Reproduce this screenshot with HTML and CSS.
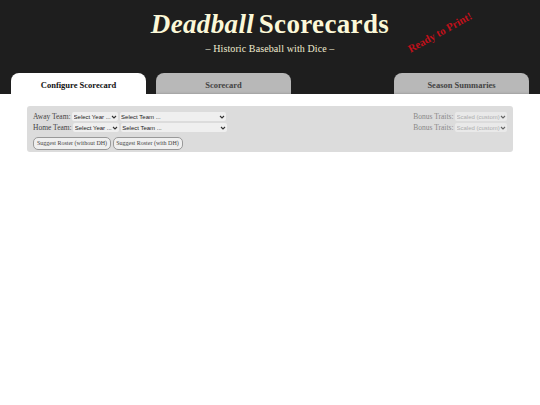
FILE: index.html
```html
<!DOCTYPE html>
<html>
<head>
    <title>Deadball Scorecards</title>
    <link rel="stylesheet" href="styles.css">
</head>
<body>
    <div class="header">
        <h1 class="title"><em>Deadball</em> Scorecards</h1>
        <div class="subtitle">– Historic Baseball with Dice –</div>
        <div class="stamp">Ready to Print!</div>
        <div class="tabs">
            <div class="tab active">Configure Scorecard</div>
            <div class="tab">Scorecard</div>
            <div class="tab-gap"></div>
            <div class="tab">Season Summaries</div>
        </div>
    </div>

    <form class="panel">
        <div class="panel-left">
            <div class="team-row">
                <label>Away Team:</label>
                <select class="year"><option>Select Year ...</option></select>
                <select class="team"><option>Select Team ...</option></select>
            </div>
            <div class="team-row">
                <label>Home Team:</label>
                <select class="year"><option>Select Year ...</option></select>
                <select class="team"><option>Select Team ...</option></select>
            </div>
            <div class="buttons">
                <button type="button" class="without-dh">Suggest Roster (without DH)</button>
                <button type="button" class="with-dh">Suggest Roster (with DH)</button>
            </div>
        </div>
        <div class="panel-right">
            <div class="team-row">
                <label>Bonus Traits:</label>
                <select class="traits" disabled><option>Scaled (custom)</option></select>
            </div>
            <div class="team-row">
                <label>Bonus Traits:</label>
                <select class="traits" disabled><option>Scaled (custom)</option></select>
            </div>
        </div>
    </form>
</body>
</html>
```

FILE: styles.css
```css
body {
    margin: 0;
    background: #fff;
    font-family: "Liberation Serif", serif;
}

.header {
    position: relative;
    height: 94px;
    background: #1e1e1e;
    overflow: hidden;
}

.title {
    margin: 0;
    padding-top: 9px;
    text-align: center;
    font-size: 27px;
    line-height: 31px;
    font-weight: bold;
    letter-spacing: 0.35px;
    word-spacing: -2.5px;
    color: #fbf8d8;
}

.subtitle {
    margin-top: 2px;
    text-align: center;
    font-size: 10px;
    line-height: 13px;
    letter-spacing: 0.1px;
    color: #efecd0;
}

.stamp {
    position: absolute;
    left: 404px;
    top: 26px;
    transform: rotate(-29deg);
    font-size: 10.8px;
    font-weight: bold;
    color: #c0101a;
}

.tabs {
    position: absolute;
    left: 11px;
    right: 11px;
    bottom: 0;
    display: flex;
    gap: 10px;
}

.tab {
    width: 135px;
    height: 21px;
    box-sizing: border-box;
    padding-top: 6px;
    background: #b8b8b8;
    border-radius: 8px 8px 0 0;
    box-shadow: inset 0 -2px 2px -1px #a2a2a2;
    text-align: center;
    font-size: 8.5px;
    line-height: 12px;
    font-weight: bold;
    color: #444;
}

.tab.active {
    background: #fff;
    box-shadow: none;
    color: #111;
}

.tab-gap {
    flex: 1;
}

.panel {
    display: flex;
    justify-content: space-between;
    margin: 12px 27px 0;
    padding: 5px 6px 4px 6px;
    height: 37px;
    background: #dcdcdc;
    border-radius: 3px;
}

.team-row {
    display: flex;
    align-items: center;
    gap: 1.5px;
    height: 11px;
    font-size: 7.5px;
    color: #444;
}

select {
    appearance: none;
    height: 9.5px;
    padding: 0 6px 0 1.5px;
    border: 0;
    border-radius: 2px;
    background: #efefef url("data:image/svg+xml,%3Csvg xmlns='http://www.w3.org/2000/svg' width='6' height='4'%3E%3Cpath d='M1 1l2 2 2-2' fill='none' stroke='%23333' stroke-width='1.1'/%3E%3C/svg%3E") no-repeat right 1px center;
    font-family: "Liberation Sans", sans-serif;
    font-size: 6px;
    color: #222;
}

.year {
    width: 46px;
}

.team {
    width: 106px;
}

.panel-right .team-row {
    justify-content: flex-end;
    color: #888;
}

.traits {
    width: 52px;
    color: #999;
}

.buttons {
    display: flex;
    gap: 1.5px;
    margin-top: 4px;
}

button {
    height: 12.5px;
    padding: 0;
    border: 1px solid #999;
    border-radius: 5px;
    background: #efefef;
    font-family: "Liberation Serif", serif;
    font-size: 6px;
    color: #444;
}

.without-dh {
    width: 78px;
}

.with-dh {
    width: 70px;
}
```
